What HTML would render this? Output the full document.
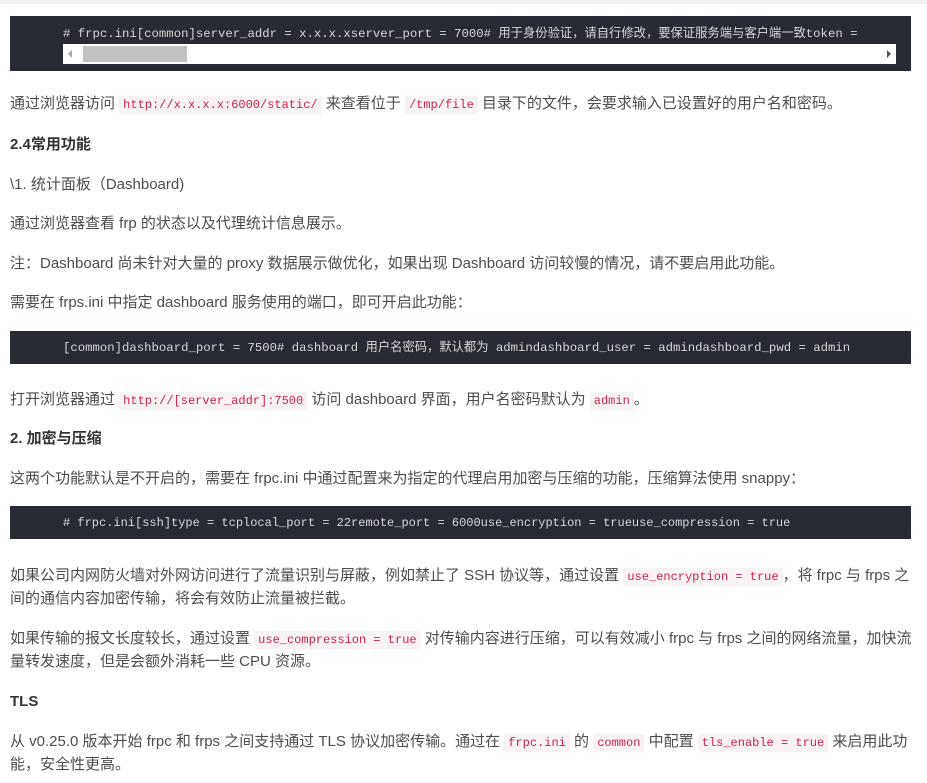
<!DOCTYPE html>
<html><head><meta charset="utf-8"><style>
body{margin:0;width:927px;height:783px;background:#fff;position:relative;overflow:hidden;font-family:"Liberation Sans","Noto Sans CJK SC",sans-serif;font-size:15px;color:#4d4d4d}
.top{position:absolute;left:0;top:0;width:927px;height:4px;background:#f2f2f2}
.l{position:absolute;left:10px;line-height:20px;white-space:nowrap}
.b{font-weight:bold;color:#333}
.pre{position:absolute;left:10px;width:901px;background:#282b33;color:#d6d6d6;font-family:"Liberation Mono","Noto Sans CJK SC",monospace;font-size:12.3px;white-space:nowrap;overflow:hidden}
.pre span{position:absolute;left:53px;line-height:18px}
code{font-family:"Liberation Mono",monospace;font-size:12px;color:#c7254e;background:#f9f2f4;padding:2px 4px;border-radius:2px}
.sb{position:absolute;left:53px;top:28px;width:833px;height:20px;background:#fff}
.th{position:absolute;left:20px;top:2px;width:104px;height:16px;background:#c1c1c1}
</style></head><body>
<div class="top"></div>
<div class="pre" style="top:16px;height:55px"><span style="top:9px"># frpc.ini[common]server_addr = x.x.x.xserver_port = 7000# 用于身份验证，请自行修改，要保证服务端与客户端一致token =</span>
<div class="sb"><div class="th"></div><div style="position:absolute;left:5px;top:6px;border:4px solid transparent;border-right:4px solid #aaa;border-left:0"></div><div style="position:absolute;right:5px;top:6px;border:4px solid transparent;border-left:4px solid #555;border-right:0"></div></div></div>
<div class="l" style="top:94px">通过浏览器访问 <code>http://x.x.x.x:6000/static/</code> 来查看位于 <code>/tmp/file</code> 目录下的文件，会要求输入已设置好的用户名和密码。</div>
<div class="l b" style="top:135px">2.4常用功能</div>
<div class="l" style="top:175px">\1. 统计面板（Dashboard)</div>
<div class="l" style="top:214px">通过浏览器查看 frp 的状态以及代理统计信息展示。</div>
<div class="l" style="top:254px">注：Dashboard 尚未针对大量的 proxy 数据展示做优化，如果出现 Dashboard 访问较慢的情况，请不要启用此功能。</div>
<div class="l" style="top:293px">需要在 frps.ini 中指定 dashboard 服务使用的端口，即可开启此功能：</div>
<div class="pre" style="top:331px;height:33px"><span style="top:8px">[common]dashboard_port = 7500# dashboard 用户名密码，默认都为 admindashboard_user = admindashboard_pwd = admin</span></div>
<div class="l" style="top:390px">打开浏览器通过 <code>http://[server_addr]:7500</code> 访问 dashboard 界面，用户名密码默认为 <code>admin</code>。</div>
<div class="l b" style="top:429px">2. 加密与压缩</div>
<div class="l" style="top:469px">这两个功能默认是不开启的，需要在 frpc.ini 中通过配置来为指定的代理启用加密与压缩的功能，压缩算法使用 snappy：</div>
<div class="pre" style="top:506px;height:33px"><span style="top:8px;font-size:12px"># frpc.ini[ssh]type = tcplocal_port = 22remote_port = 6000use_encryption = trueuse_compression = true</span></div>
<div class="l" style="top:566px">如果公司内网防火墙对外网访问进行了流量识别与屏蔽，例如禁止了 SSH 协议等，通过设置 <code>use_encryption = true</code>，将 frpc 与 frps 之</div>
<div class="l" style="top:589px">间的通信内容加密传输，将会有效防止流量被拦截。</div>
<div class="l" style="top:629px">如果传输的报文长度较长，通过设置 <code>use_compression = true</code> 对传输内容进行压缩，可以有效减小 frpc 与 frps 之间的网络流量，加快流</div>
<div class="l" style="top:652px">量转发速度，但是会额外消耗一些 CPU 资源。</div>
<div class="l b" style="top:692px">TLS</div>
<div class="l" style="top:732px">从 v0.25.0 版本开始 frpc 和 frps 之间支持通过 TLS 协议加密传输。通过在 <code>frpc.ini</code> 的 <code>common</code> 中配置 <code>tls_enable = true</code> 来启用此功</div>
<div class="l" style="top:755px">能，安全性更高。</div>
</body></html>
